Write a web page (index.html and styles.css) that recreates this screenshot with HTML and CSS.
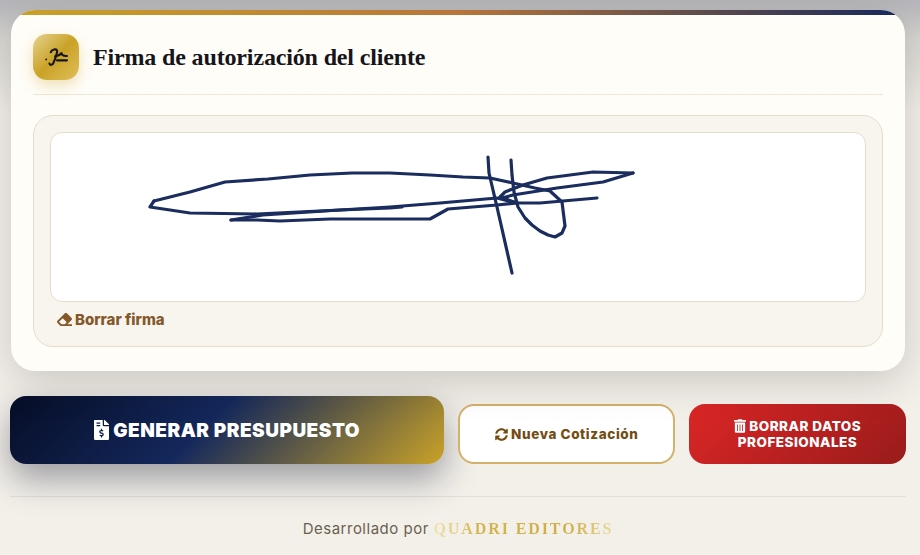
FILE: index.html
```html
<!DOCTYPE html>
<html lang="es">
<head>
<meta charset="utf-8">
<title>Firma de autorización del cliente</title>
<link rel="stylesheet" href="styles.css">
</head>
<body>
<main class="page">
  <section class="card">
    <header class="card-head">
      <span class="head-icon">
        <svg class="sig-icon" viewBox="0 0 24 20" aria-hidden="true">
          <circle cx="1.2" cy="12" r="1"/>
          <path class="sig-line" d="M6 4.5C6.8 1.6 12 .4 12.6 2.8 13 4.6 10.6 12 8.6 16 7.6 18 5 18.4 4.6 16.4"/>
          <path class="sig-line" d="M10.5 8.6C13.5 8.4 15.6 7.4 17.2 5.4 17.6 8 19.4 8.6 23 8.4"/>
          <path class="sig-line" d="M12.5 13H23"/>
        </svg>
      </span>
      <h2 class="card-title">Firma de autorización del cliente</h2>
    </header>
    <div class="sign-panel">
      <div class="sign-canvas">
        <svg class="sign-stroke" viewBox="0 0 814 168" aria-hidden="true">
          <g transform="translate(-51 -133)">
            <polyline points="154,201 150,207 190,213 257,214 340,210 390,207 440,203 497,198 517,203 540,203 597,198"/>
            <polyline points="154,201 190,192 225,182 268,179 310,175 352,173 390,173 430,175 463,177 490,178 513,183 535,188 550,191 562,202 564,218 565,226 562,233 555,237 548,235 540,231 532,225 525,218 518,207 514,192 512,175 511,160"/>
            <polyline points="488,157 489,173 497,207 512,273"/>
            <polyline points="633,173 593,172 547,178 523,185 505,192 500,197 517,203"/>
            <polyline points="633,173 603,182 557,188 513,195 502,198"/>
            <polyline points="231,220 263,215 340,210 390,208 402,207"/>
            <polyline points="231,220 257,220 280,221 330,219 390,219 430,219 448,209 497,205 517,203"/>
          </g>
        </svg>
      </div>
      <button class="clear-sign" type="button">
        <svg class="ico" viewBox="0 0 512 512" aria-hidden="true"><path d="M497.941 273.941c18.745-18.745 18.745-49.137 0-67.882l-160-160c-18.745-18.745-49.136-18.746-67.883 0l-256 256c-18.745 18.745-18.745 49.137 0 67.882l96 96A48.004 48.004 0 0 0 144 480h356c6.627 0 12-5.373 12-12v-40c0-6.627-5.373-12-12-12H355.883l142.058-142.059zm-302.627-62.627l137.373 137.373L265.373 416H150.628l-80-80 124.686-124.686z"/></svg>
        Borrar firma
      </button>
    </div>
  </section>

  <div class="actions">
    <button class="btn btn-generate" type="button">
      <svg class="ico ico-file" viewBox="0 0 384 512" aria-hidden="true"><path d="M377 105L279.1 7c-4.5-4.5-10.6-7-17-7H256v128h128v-6.1c0-6.3-2.5-12.4-7-16.9zm-153 31V0H24C10.7 0 0 10.7 0 24v464c0 13.3 10.7 24 24 24h336c13.3 0 24-10.7 24-24V160H248c-13.2 0-24-10.8-24-24zM64 72c0-4.42 3.58-8 8-8h80c4.42 0 8 3.58 8 8v16c0 4.42-3.58 8-8 8H72c-4.42 0-8-3.58-8-8V72zm0 80v-16c0-4.42 3.58-8 8-8h80c4.42 0 8 3.58 8 8v16c0 4.42-3.58 8-8 8H72c-4.42 0-8-3.58-8-8zm144 263.88V440c0 4.42-3.58 8-8 8h-16c-4.42 0-8-3.58-8-8v-24.29c-11.29-.58-22.27-4.52-31.37-11.35-3.9-2.93-4.1-8.77-.57-12.14l11.75-11.21c2.77-2.64 6.89-2.76 10.13-.73 3.87 2.42 8.26 3.72 12.82 3.72h28.11c6.5 0 11.8-5.92 11.8-13.19 0-5.95-3.61-11.19-8.77-12.73l-45-13.5c-18.59-5.58-31.58-23.42-31.58-43.39 0-24.52 19.05-44.44 42.67-45.07V232c0-4.42 3.58-8 8-8h16c4.42 0 8 3.58 8 8v24.29c11.29.58 22.27 4.51 31.37 11.35 3.9 2.93 4.1 8.77.57 12.14l-11.75 11.21c-2.77 2.64-6.89 2.76-10.13.73-3.87-2.43-8.26-3.72-12.82-3.72h-28.11c-6.5 0-11.8 5.92-11.8 13.19 0 5.95 3.61 11.19 8.77 12.73l45 13.5c18.59 5.58 31.58 23.42 31.58 43.39 0 24.53-19.05 44.44-42.67 45.07z"/></svg>
      GENERAR PRESUPUESTO
    </button>
    <button class="btn btn-new" type="button">
      <svg class="ico" viewBox="0 0 512 512" aria-hidden="true"><path d="M370.72 133.28C339.458 104.008 298.888 87.962 255.848 88c-77.458.068-144.328 53.178-162.791 126.85-1.344 5.363-6.122 9.15-11.651 9.15H24.103c-7.498 0-13.194-6.807-11.807-14.176C33.933 94.924 134.813 8 256 8c66.448 0 126.791 26.136 171.315 68.685L463.03 40.97C478.149 25.851 504 36.559 504 57.941V192c0 13.255-10.745 24-24 24H345.941c-21.382 0-32.09-25.851-16.971-40.971l41.75-41.749zM32 296h134.059c21.382 0 32.09 25.851 16.971 40.971l-41.75 41.75c31.262 29.273 71.835 45.319 114.876 45.28 77.418-.07 144.315-53.144 162.787-126.849 1.344-5.363 6.122-9.15 11.651-9.15h57.304c7.498 0 13.194 6.807 11.807 14.176C478.067 417.076 377.187 504 256 504c-66.448 0-126.791-26.136-171.315-68.685L48.97 471.03C33.851 486.149 8 475.441 8 454.059V320c0-13.255 10.745-24 24-24z"/></svg>
      Nueva Cotización
    </button>
    <button class="btn btn-delete" type="button">
      <svg class="ico" viewBox="0 0 448 512" aria-hidden="true"><path d="M32 464a48 48 0 0 0 48 48h288a48 48 0 0 0 48-48V128H32zm272-256a16 16 0 0 1 32 0v224a16 16 0 0 1-32 0zm-96 0a16 16 0 0 1 32 0v224a16 16 0 0 1-32 0zm-96 0a16 16 0 0 1 32 0v224a16 16 0 0 1-32 0zM432 32H312l-9.4-18.7A24 24 0 0 0 281.1 0H166.8a23.72 23.72 0 0 0-21.4 13.3L136 32H16A16 16 0 0 0 0 48v32a16 16 0 0 0 16 16h416a16 16 0 0 0 16-16V48a16 16 0 0 0-16-16z"/></svg>
      BORRAR DATOS PROFESIONALES
    </button>
  </div>

  <footer class="foot">
    Desarrollado por <span class="brand">QUADRI EDITORES</span>
  </footer>
</main>
</body>
</html>
```

FILE: styles.css
```css
* { box-sizing: border-box; }

html, body { height: 100%; }

body {
  margin: 0;
  overflow: hidden;
  font-family: Inter, "Liberation Sans", sans-serif;
  background:
    linear-gradient(to bottom, #b6b6ba 0, #bcbcbf 10px, rgba(214,212,208,.9) 40px, rgba(243,240,234,0) 110px),
    #f3f0ea;
}

.page {
  padding: 10px 14px 0 10px;
}

.card {
  position: relative;
  overflow: hidden;
  margin-left: 1px;
  margin-right: 1px;
  height: 361px;
  padding: 24px 22px 0;
  background: #fffdf8;
  border-radius: 24px;
  box-shadow: 0 10px 40px rgba(40, 35, 25, .2);
}

.card::before {
  content: "";
  position: absolute;
  inset: 0 0 auto 0;
  height: 5px;
  background: linear-gradient(90deg, #c9a227 0%, #b8763a 50%, #14285c 100%);
}

.card-head {
  display: flex;
  align-items: center;
  gap: 14px;
  height: 61px;
  padding-bottom: 14px;
  border-bottom: 1px solid #efe7d6;
}

.head-icon {
  display: flex;
  align-items: center;
  justify-content: center;
  width: 46px;
  height: 46px;
  border-radius: 14px;
  background: linear-gradient(135deg, #e6d391 0%, #c9a227 50%, #e0bf5a 100%);
  box-shadow: 0 6px 14px rgba(201, 162, 39, .3);
}

.sig-icon {
  width: 23px;
  height: 19px;
  fill: #15151a;
}

.sig-line {
  fill: none;
  stroke: #15151a;
  stroke-width: 2.2;
  stroke-linecap: round;
  stroke-linejoin: round;
}

.card-title {
  margin: 1px 0 0;
  font-family: "Liberation Serif", serif;
  font-size: 24px;
  font-weight: 700;
  letter-spacing: -.15px;
  color: #15151a;
}

.sign-panel {
  margin-top: 20px;
  height: 232px;
  padding: 16px;
  background: #f8f5ee;
  border: 1px solid #e6dcc8;
  border-radius: 20px;
}

.sign-canvas {
  height: 170px;
  background: #fff;
  border: 1px solid #e6dcc8;
  border-radius: 12px;
}

.sign-stroke {
  display: block;
  width: 100%;
  height: 100%;
}

.sign-stroke polyline {
  fill: none;
  stroke: #1a2d5e;
  stroke-width: 3.2;
  stroke-linejoin: round;
  stroke-linecap: round;
}

.clear-sign {
  display: flex;
  align-items: center;
  gap: 3px;
  margin-top: 8px;
  padding: 0 7px;
  background: none;
  border: 0;
  font: 800 15px Inter, "Liberation Sans", sans-serif;
  color: #84582a;
}

.ico {
  width: 1em;
  height: 1em;
  fill: currentColor;
  flex: none;
}

.clear-sign .ico { width: 15px; height: 15px; }

.actions {
  display: grid;
  grid-template-columns: 2fr 1fr 1fr;
  align-items: end;
  gap: 14px;
  margin-top: 25px;
}

.btn {
  height: 60px;
  padding: 0 14px;
  border: 0;
  border-radius: 16px;
  text-align: center;
  font-family: Inter, "Liberation Sans", sans-serif;
  font-weight: 800;
}

.btn-generate {
  height: 68px;
  font-size: 19px;
  font-weight: 900;
  letter-spacing: .5px;
  color: #fff;
  background: linear-gradient(135deg, #060d26 0%, #14285c 45%, #c9a227 100%);
  box-shadow: 0 15px 35px rgba(10, 17, 40, .38);
}

.btn-generate .ico { width: 15px; height: 20px; vertical-align: -3px; }

.btn-new {
  font-size: 13.5px;
  letter-spacing: .6px;
  color: #744c12;
  background: #fff;
  border: 2px solid #d4b06a;
}

.btn-new .ico { width: 13px; height: 13px; vertical-align: -2px; }

.btn-delete {
  font-size: 13.5px;
  line-height: 16px;
  letter-spacing: .5px;
  color: #fff;
  background: linear-gradient(135deg, #dc2626 0%, #991b1b 100%);
}

.btn-delete .ico { width: 12px; height: 14px; vertical-align: -2px; }

.foot {
  margin-top: 32px;
  padding-top: 22px;
  border-top: 1px solid #e4dfd0;
  text-align: center;
  font-size: 15px;
  letter-spacing: .5px;
  color: #6b5f50;
}

.brand {
  font-family: "Liberation Serif", serif;
  font-weight: 700;
  font-size: 16px;
  letter-spacing: 1.9px;
  background: linear-gradient(90deg, #efe3b4 0%, #d4b44e 25%, #d0ae48 75%, #e8d9a0 100%);
  -webkit-background-clip: text;
  background-clip: text;
  color: transparent;
}
```
